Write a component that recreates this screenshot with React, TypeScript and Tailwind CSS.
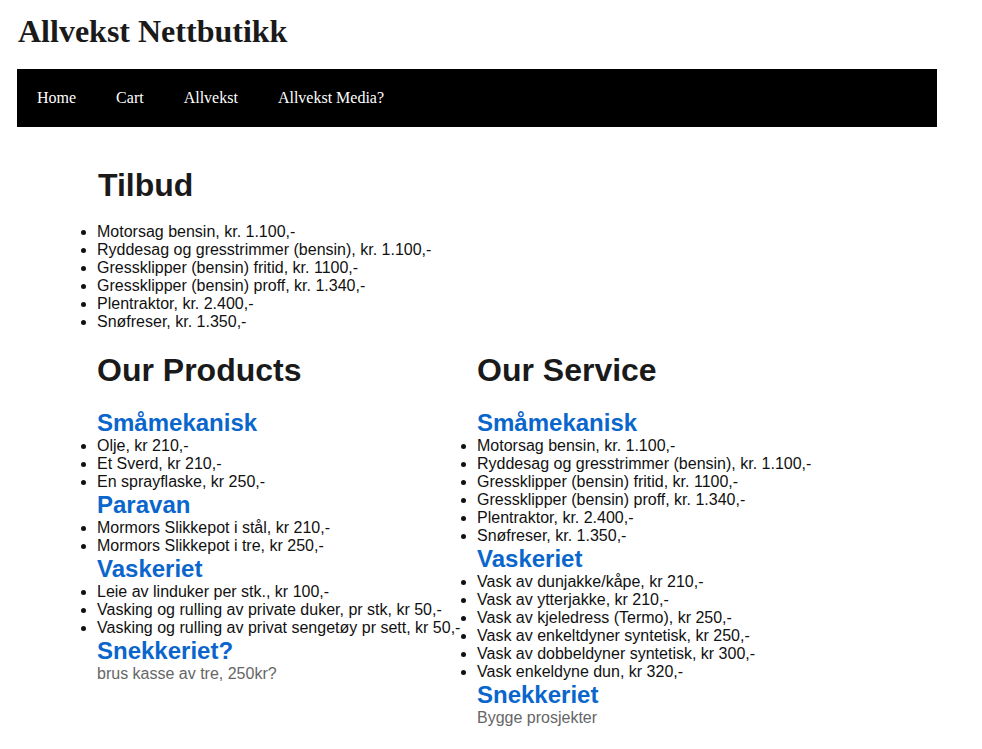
const tilbud = [
  "Motorsag bensin, kr. 1.100,-",
  "Ryddesag og gresstrimmer (bensin), kr. 1.100,-",
  "Gressklipper (bensin) fritid, kr. 1100,-",
  "Gressklipper (bensin) proff, kr. 1.340,-",
  "Plentraktor, kr. 2.400,-",
  "Snøfreser, kr. 1.350,-",
];

type Group = { title: string; items?: string[]; note?: string };

const products: Group[] = [
  { title: "Småmekanisk", items: ["Olje, kr 210,-", "Et Sverd, kr 210,-", "En sprayflaske, kr 250,-"] },
  { title: "Paravan", items: ["Mormors Slikkepot i stål, kr 210,-", "Mormors Slikkepot i tre, kr 250,-"] },
  {
    title: "Vaskeriet",
    items: [
      "Leie av linduker per stk., kr 100,-",
      "Vasking og rulling av private duker, pr stk, kr 50,-",
      "Vasking og rulling av privat sengetøy pr sett, kr 50,-",
    ],
  },
  { title: "Snekkeriet?", note: "brus kasse av tre, 250kr?" },
];

const services: Group[] = [
  { title: "Småmekanisk", items: tilbud },
  {
    title: "Vaskeriet",
    items: [
      "Vask av dunjakke/kåpe, kr 210,-",
      "Vask av ytterjakke, kr 210,-",
      "Vask av kjeledress (Termo), kr 250,-",
      "Vask av enkeltdyner syntetisk, kr 250,-",
      "Vask av dobbeldyner syntetisk, kr 300,-",
      "Vask enkeldyne dun, kr 320,-",
    ],
  },
  { title: "Snekkeriet", note: "Bygge prosjekter" },
];

function ItemList({ items }: { items: string[] }) {
  return (
    <ul className="list-disc text-[16px] leading-[18px] text-[#111]">
      {items.map((item) => (
        <li key={item} className="whitespace-nowrap">
          {item}
        </li>
      ))}
    </ul>
  );
}

function Column({ heading, groups }: { heading: string; groups: Group[] }) {
  return (
    <section>
      <h2 className="mb-[21px] text-[32px] font-bold leading-[36px] text-[#1a1a1a]">{heading}</h2>
      {groups.map((g) => (
        <div key={g.title}>
          <h3 className="text-[24px] font-bold leading-[28px] text-[#0a66cc]">{g.title}</h3>
          {g.items && <ItemList items={g.items} />}
          {g.note && <p className="text-[16px] leading-[18px] text-[#666]">{g.note}</p>}
        </div>
      ))}
    </section>
  );
}

export default function App() {
  const links = ["Home", "Cart", "Allvekst", "Allvekst Media?"];
  return (
    <div className="min-h-[749px] bg-white font-['Liberation_Sans',Arial,sans-serif]">
      <header className="pl-[17px] font-['Liberation_Serif','Times_New_Roman',serif]">
        <h1 className="pt-[13px] pl-px text-[32px] font-bold leading-[36px] text-[#1a1a1a]">
          Allvekst Nettbutikk
        </h1>
        <nav className="mt-5 flex h-[58px] w-[920px] items-center bg-black">
          {links.map((l) => (
            <a key={l} href="#" className="px-5 text-[16px] text-white">
              {l}
            </a>
          ))}
        </nav>
      </header>

      <main className="pl-[97px] pt-10">
        <h2 className="pl-px text-[32px] font-bold leading-[36px] text-[#1a1a1a]">Tilbud</h2>
        <div className="mt-5">
          <ItemList items={tilbud} />
        </div>
        <div className="mt-[21px] grid grid-cols-[380px_380px]">
          <Column heading="Our Products" groups={products} />
          <Column heading="Our Service" groups={services} />
        </div>
      </main>
    </div>
  );
}
